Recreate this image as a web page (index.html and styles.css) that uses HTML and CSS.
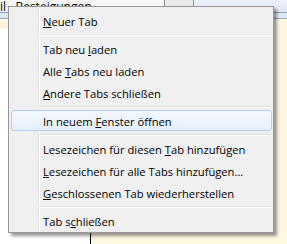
FILE: index.html
```html
<!DOCTYPE html>
<html lang="de">
<head>
<meta charset="utf-8">
<title>Tab-Kontextmenü</title>
<link rel="stylesheet" href="styles.css">
</head>
<body>
<div class="screen">
  <div class="tabbar">
    <div class="tab tab-active"><span class="tab-text">il&nbsp;&nbsp;&nbsp;Besteigungen</span></div>
    <div class="tab tab-other"></div>
  </div>
  <div class="toolbar"></div>
  <div class="content">
    <div class="sidebar"><div class="sidebar-row"></div></div>
    <div class="main"></div>
  </div>

  <div class="menu">
    <div class="item"><u class="key">N</u>euer Tab</div>
    <div class="sep"></div>
    <div class="item">Tab neu <u class="key">l</u>aden</div>
    <div class="item">Alle <u class="key">T</u>abs neu laden</div>
    <div class="item"><u class="key">A</u>ndere Tabs schließen</div>
    <div class="sep"></div>
    <div class="item item-hot">In neuem <u class="key">F</u>enster öffnen</div>
    <div class="sep"></div>
    <div class="item">Lesezeichen für diesen <u class="key">T</u>ab hinzufügen</div>
    <div class="item"><u class="key">L</u>esezeichen für alle Tabs hinzufügen...</div>
    <div class="item"><u class="key">G</u>eschlossenen Tab wiederherstellen</div>
    <div class="sep"></div>
    <div class="item">Tab s<u class="key">c</u>hließen</div>
  </div>
</div>
</body>
</html>
```
FILE: styles.css
```css
* { box-sizing: border-box; }

html, body {
  margin: 0;
  padding: 0;
  width: 287px;
  height: 244px;
  overflow: hidden;
}

.screen {
  position: relative;
  width: 287px;
  height: 244px;
  display: flex;
  flex-direction: column;
  font-family: "Open Sans", "Noto Sans", sans-serif;
  background: #fef8e3;
}

/* background window */
.tabbar {
  height: 12px;
  display: flex;
  background: linear-gradient(#eef1f9, #dfe6f3);
}

.tab {
  height: 12px;
  border-right: 1px solid #8f9090;
  overflow: hidden;
}

.tab-active {
  width: 165px;
  background: #f6f6f6;
}

.tab-other {
  width: 29px;
  background: #e9e9e9;
}

.tab-text {
  display: block;
  font-size: 12px;
  line-height: 13px;
  white-space: nowrap;
  color: #000;
}

.toolbar {
  height: 7px;
  border-top: 1px solid #8c9fbd;
  border-bottom: 1px solid #a3a8ae;
  background: #dfe8f5;
}

.content {
  flex: 1;
  display: flex;
}

.sidebar {
  width: 91px;
  background: #fff;
  border-right: 1px solid #000;
  padding-top: 1px;
}

.sidebar-row {
  height: 9px;
  background: #fdf6df;
}

.main {
  flex: 1;
  background: #fef8e3;
}

/* context menu (overlay) */
.menu {
  position: absolute;
  left: 8px;
  top: 6px;
  width: 266px;
  height: 227px;
  border: 1px solid #979797;
  padding: 2px 1px 1px 2px;
  background:
    linear-gradient(to right,
      #f0f0f0 0 29px,
      #e2e3e3 29px 30px,
      #ffffff 30px 31px,
      #f0f0f0 31px);
  box-shadow: 3px 3px 3px rgba(0, 0, 0, 0.4);
  font-size: 11.2px;
  color: #000;
}

.item {
  height: 21px;
  margin-top: 1px;
  padding-left: 31px;
  border: 1px solid transparent;
  border-radius: 3px;
  line-height: 21px;
  white-space: nowrap;
}

.item-hot {
  border-color: #aecff3;
  background: linear-gradient(#f3f8fe, #e6effb);
}

.key {
  text-decoration: underline;
  text-underline-offset: 1px;
}

.sep {
  height: 6px;
  margin-left: 28px;
  background: linear-gradient(to bottom,
    transparent 0 3px,
    #e0e0e0 3px 4px,
    #ffffff 4px 5px,
    transparent 5px);
}
```
